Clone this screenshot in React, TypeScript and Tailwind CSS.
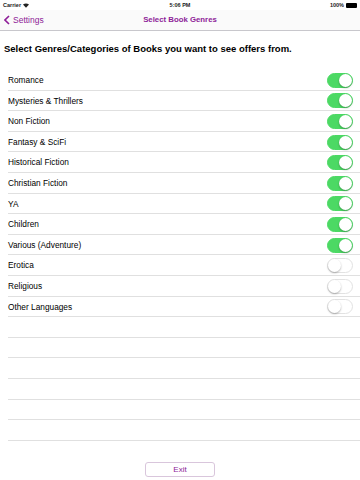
import React, { useState } from 'react';

const genres: { name: string; on: boolean }[] = [
  { name: 'Romance', on: true },
  { name: 'Mysteries & Thrillers', on: true },
  { name: 'Non Fiction', on: true },
  { name: 'Fantasy & SciFi', on: true },
  { name: 'Historical Fiction', on: true },
  { name: 'Christian Fiction', on: true },
  { name: 'YA', on: true },
  { name: 'Children', on: true },
  { name: 'Various (Adventure)', on: true },
  { name: 'Erotica', on: false },
  { name: 'Religious', on: false },
  { name: 'Other Languages', on: false },
];

function Toggle({ on, onClick }: { on: boolean; onClick: () => void }) {
  return (
    <button
      onClick={onClick}
      className={`relative w-[26px] h-[15px] rounded-full border ${
        on ? 'bg-[#4cd964] border-[#4cd964]' : 'bg-white border-[#e2e2e2]'
      }`}
    >
      <span
        className={`absolute top-[0px] w-[13px] h-[13px] rounded-full bg-white shadow-[0_1px_2px_rgba(0,0,0,0.3)] ${
          on ? 'right-[0px]' : 'left-[0px]'
        }`}
      />
    </button>
  );
}

export default function App() {
  const [items, setItems] = useState(genres);

  const flip = (i: number) =>
    setItems(items.map((g, j) => (j === i ? { ...g, on: !g.on } : g)));

  return (
    <div className="w-[360px] h-[480px] bg-white flex flex-col font-['Liberation_Sans',Arial,sans-serif] text-black overflow-hidden">
      {/* status bar */}
      <div className="h-[10px] flex items-center justify-between px-[3px] text-[5.5px] font-bold text-[#222]">
        <div className="flex items-center gap-[2px] w-[60px]">
          <span>Carrier</span>
          <svg width="6" height="5" viewBox="0 0 12 9">
            <path d="M6 9 L0 2.5 Q6 -2 12 2.5 Z" fill="#222" />
          </svg>
        </div>
        <span>5:06 PM</span>
        <div className="flex items-center justify-end gap-[2px] w-[60px]">
          <span>100%</span>
          <span className="w-[11px] h-[5px] rounded-[1px] bg-black" />
        </div>
      </div>

      {/* nav bar */}
      <div className="h-[21px] relative flex items-center justify-center border-b border-[#c8c7cc] bg-[#fafafa]">
        <div className="absolute left-[4px] top-0 h-full flex items-center gap-[3px] text-[#8e1c98] text-[8.5px]">
          <svg width="6" height="10" viewBox="0 0 6 10">
            <path d="M5 1 L1 5 L5 9" stroke="#8e1c98" strokeWidth="1.6" fill="none" />
          </svg>
          <span>Settings</span>
        </div>
        <span className="text-[#8e1c98] text-[7.8px] font-bold">Select Book Genres</span>
      </div>

      {/* heading */}
      <div className="pt-[11px] pl-[4px] h-[39px] text-[9.5px] font-bold">
        Select Genres/Categories of Books you want to see offers from.
      </div>

      {/* list */}
      <div className="flex flex-col">
        {items.map((g, i) => (
          <div key={g.name} className="h-[20.6px] flex items-center justify-between pl-[8px] pr-[7px] relative">
            <span className="text-[8.3px]">{g.name}</span>
            <Toggle on={g.on} onClick={() => flip(i)} />
            <div className="absolute left-[8px] right-0 bottom-0 h-px bg-[#e0e0e0]" />
          </div>
        ))}
        {Array.from({ length: 6 }).map((_, i) => (
          <div key={i} className="h-[20.6px] ml-[8px] border-b border-[#e0e0e0]" />
        ))}
      </div>

      {/* exit */}
      <div className="flex-1 flex items-end justify-center pb-[3px]">
        <button className="w-[70px] h-[15px] rounded-[3px] border border-[#d9c6dc] text-[#8e1c98] text-[8px]">
          Exit
        </button>
      </div>
    </div>
  );
}
